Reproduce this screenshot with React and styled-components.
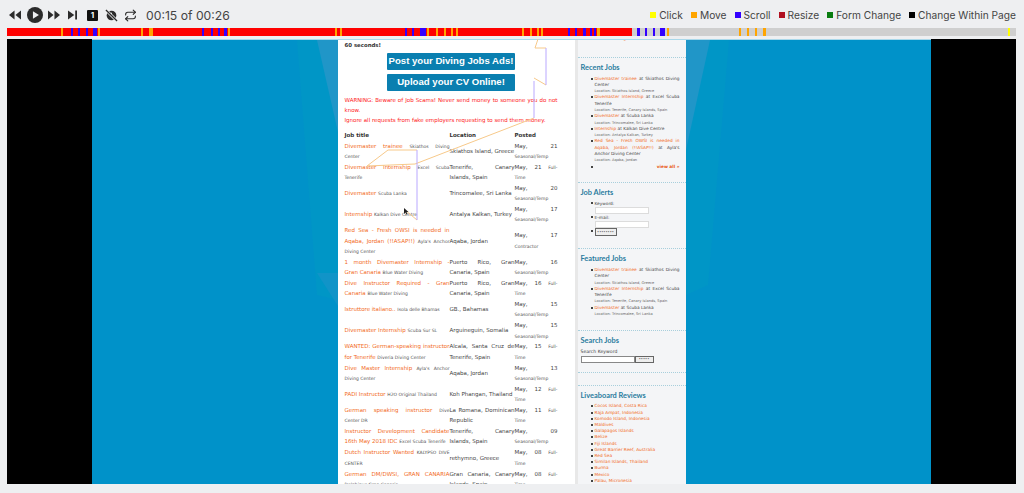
import React from "react";
import styled, { createGlobalStyle } from "styled-components";
import { Repeat } from "lucide-react";

const GlobalStyle = createGlobalStyle`
    html, body {
        margin: 0;
        padding: 0;
        height: 493px;
        overflow: hidden;
        background: #eeeff1;
    }
`;

const Player = styled.div`
    width: 1024px;
    height: 493px;
    display: flex;
    flex-direction: column;
    font-family: Inter, "Liberation Sans", sans-serif;
`;

const Toolbar = styled.div`
    height: 28px;
    display: flex;
    align-items: center;
    padding: 2px 8px 0 9px;
    box-sizing: border-box;
`;

const Controls = styled.div`
    display: flex;
    align-items: center;
`;

const IconSlot = styled.span`
    display: flex;
    align-items: center;
    margin-right: ${(p) => p.$gap}px;
    color: #2b2b2b;
`;

const Badge = styled.span`
    width: 11px;
    height: 11px;
    border-radius: 1px;
    background: #111;
    color: #fff;
    font-size: 8px;
    font-weight: 700;
    display: flex;
    align-items: center;
    justify-content: center;
`;

const Clock = styled.span`
    margin-left: 9px;
    font-size: 12.2px;
    color: #444;
    white-space: nowrap;
`;

const Legend = styled.div`
    margin-left: auto;
    display: flex;
    align-items: center;
    gap: 8px;
`;

const LegendItem = styled.span`
    display: flex;
    align-items: center;
    gap: 3px;
    font-size: 10.2px;
    color: #444;
    white-space: nowrap;

    &::before {
        content: "";
        width: 6px;
        height: 6px;
        background: ${(p) => p.$color};
    }
`;

const Timeline = styled.div`
    position: relative;
    margin: 0 8px 0 7px;
    height: 8px;
    background: #cfcfcf;
    overflow: hidden;
`;

const Played = styled.div`
    height: 100%;
    width: 625px;
    background: #fe0000;
`;

const Marker = styled.span`
    position: absolute;
    top: 0;
    bottom: 0;
    background: ${(p) => p.$color};
`;

const Viewer = styled.div`
    position: relative;
    margin: 3px 8px 0 7px;
    height: 445px;
    display: flex;
    background: #000;
    overflow: hidden;
`;

const Stage = styled.div`
    position: relative;
    margin-left: 85px;
    width: 839px;
    background: #0092c9;
    border-top: 1px solid #a9d8ea;
    display: flex;
    justify-content: center;
    overflow: hidden;
`;

const Glare = styled.svg`
    position: absolute;
    left: 0;
    top: 0;
`;

const Page = styled.div`
    position: relative;
    width: 348px;
    display: flex;
    background: #fff;
    font-family: "DejaVu Sans", sans-serif;
    color: #444;
`;

const MainColumn = styled.div`
    flex: none;
    width: 240px;
    box-sizing: border-box;
    padding: 0 17px 0 7px;
    background: #fff;
    border-right: 3px solid #e8e8e8;
`;

const Notice = styled.div`
    font-size: 5.4px;
    font-weight: 700;
    line-height: 8px;
    margin: 1px 0 4px;
    color: #333;
`;

const AdButton = styled.div`
    width: 128px;
    height: 17px;
    margin: 0 auto 4px;
    border-radius: 1px;
    background: #0a7fb0;
    color: #fff;
    font-family: "Liberation Sans", sans-serif;
    font-size: 9.6px;
    font-weight: 700;
    line-height: 16px;
    text-align: center;
    white-space: nowrap;
`;

const Warning = styled.p`
    margin: 2px 0 5px;
    font-size: 5.5px;
    line-height: 10px;
    color: #fe2020;
    text-align: justify;
`;

const JobTable = styled.table`
    width: 213px;
    table-layout: fixed;
    border-collapse: collapse;
    font-size: 5.5px;
    line-height: 10.2px;
`;

const Th = styled.th`
    width: ${(p) => p.$w}px;
    text-align: left;
    font-weight: 700;
    color: #333;
    padding: 0;
`;

const Td = styled.td`
    padding: 0.4px 0;
    text-align: justify;
    vertical-align: middle;
`;

const JobLink = styled.span`
    color: #f26a1b;
`;

const Small = styled.span`
    font-size: 4.5px;
    line-height: 5px;
    color: #555;
`;

const Sidebar = styled.div`
    flex: 1;
    min-width: 0;
    background: #f4f5f7;
    font-size: 4.3px;
    line-height: 6.3px;
    color: #444;
`;

const Block = styled.div`
    padding: ${(p) => p.$top ?? 5}px 4px ${(p) => p.$bottom ?? 12}px 3px;
    border-bottom: 1px dotted #a8cfdc;
`;

const BlockTitle = styled.h3`
    margin: 0 0 3.5px;
    font-family: Lato, sans-serif;
    font-size: 7.4px;
    line-height: 9px;
    font-weight: 700;
    color: #2a7c9e;
`;

const List = styled.ul`
    margin: ${(p) => p.$top ?? 0}px 2px 0 0;
    padding: 0 0 0 14px;
    text-align: justify;
    list-style: none;

    & > li {
        position: relative;
    }

    & > li::before {
        content: "";
        position: absolute;
        left: -4px;
        top: 2px;
        width: 2px;
        height: 2px;
        background: #444;
    }
`;

const AlertList = styled(List)`
    line-height: 7px;
`;

const Clipped = styled(List)`
    margin-top: -4px;
    height: 12px;
    overflow: hidden;
`;

const Location = styled.div`
    font-size: 3.6px;
    line-height: 6.3px;
    color: #666;
`;

const ViewAll = styled.div`
    text-align: right;
    font-weight: 700;
    color: #e8560f;
`;

const Field = styled.div`
    width: 52px;
    height: 5px;
    background: #fff;
    border: 1px solid #dcdcdc;
`;

const MiniButton = styled.span`
    display: inline-block;
    width: ${(p) => p.$w}px;
    height: ${(p) => p.$h}px;
    line-height: ${(p) => p.$h}px;
    background: #eee;
    border: 1px solid #666;
    text-align: center;
    font-size: 3.6px;
    vertical-align: top;
`;

const SearchRow = styled.div`
    display: flex;
    align-items: center;
    margin-top: 1px;
`;

const SearchField = styled(Field)`
    width: 52px;
    border-color: #888;
`;

const SearchLabel = styled.div`
    font-size: 4.6px;
    line-height: 6px;
    color: #444;
`;

const ReviewList = styled(List)`
    font-size: 4.3px;
    line-height: 6.2px;
    color: #f26a1b;
    text-align: left;
`;

const Trace = styled.svg`
    position: absolute;
    left: 0;
    top: 0;
    pointer-events: none;
`;

const markers = [
    [61, 63, "#ffa500"], [71, 73, "#3300ff"], [78, 80, "#3300ff"], [86, 88, "#3300ff"], [93, 97, "#3300ff"],
    [98, 100, "#ffa500"], [141, 143, "#ffa500"], [149, 153, "#ffa500"], [202, 204, "#3300ff"], [211, 213, "#3300ff"],
    [218, 220, "#3300ff"], [224, 227, "#3300ff"], [228, 230, "#ffa500"], [335, 337, "#ffa500"], [340, 342, "#ffa500"],
    [405, 407, "#3300ff"], [412, 414, "#3300ff"], [420, 426, "#3300ff"], [427, 429, "#ffa500"], [436, 438, "#ffa500"],
    [444, 446, "#ffa500"], [451, 453, "#ffa500"], [456, 458, "#ffa500"], [522, 524, "#ffa500"], [530, 532, "#ffa500"],
    [537, 539, "#ffa500"], [541, 543, "#ffa500"], [568, 570, "#3300ff"], [575, 577, "#3300ff"], [583, 586, "#3300ff"],
    [590, 592, "#3300ff"], [594, 596, "#3300ff"], [597, 600, "#ffa500"], [637, 640, "#3300ff"], [645, 647, "#3300ff"],
    [653, 655, "#3300ff"], [660, 665, "#3300ff"], [667, 669, "#ffa500"], [739, 741, "#ffa500"], [747, 749, "#ffa500"],
    [755, 757, "#ffa500"], [763, 766, "#ffa500"], [1008, 1010, "#ffff00"],
];

const legend = [
    ["Click", "#ffff00"],
    ["Move", "#ffa500"],
    ["Scroll", "#3300ff"],
    ["Resize", "#b01020"],
    ["Form Change", "#0a7d10"],
    ["Change Within Page", "#000"],
];

const jobs = [
    ["Divemaster trainee", "Skiathos Diving Center", "Skiathos Island, Greece", "21", "Seasonal/Temp"],
    ["Divemaster Internship", "Excel Scuba Tenerife", "Tenerife, Canary Islands, Spain", "21", "Full-Time"],
    ["Divemaster", "Scuba Lanka", "Trincomalee, Sri Lanka", "20", "Seasonal/Temp"],
    ["Internship", "Kalkan Dive Centre", "Antalya Kalkan, Turkey", "17", "Seasonal/Temp"],
    ["Red Sea - Fresh OWSI is needed in Aqaba, Jordan (!!ASAP!!)", "Ayla's Anchor Diving Center", "Aqaba, Jordan", "17", "Contractor"],
    ["1 month Divemaster Internship - Gran\u00a0Canaria", "Blue Water Diving", "Puerto Rico, Gran Canaria, Spain", "16", "Seasonal/Temp"],
    ["Dive Instructor Required - Gran Canaria", "Blue Water Diving", "Puerto Rico, Gran Canaria, Spain", "16", "Full-Time"],
    ["Istruttore italiano..", "Isola delle Bhamas", "GB., Bahamas", "15", "Seasonal/Temp"],
    ["Divemaster Internship", "Scuba Sur SL", "Arguineguin, Somalia", "15", "Seasonal/Temp"],
    ["WANTED: German-speaking instructor for Tenerife", "Diveria Diving Center", "Alcala, Santa Cruz de Tenerife, Spain", "15", "Full-Time"],
    ["Dive Master Internship", "Ayla's Anchor Diving Center", "Aqaba, Jordan", "13", "Seasonal/Temp"],
    ["PADI Instructor", "H2O Original Thailand", "Koh Phangan, Thailand", "12", "Full-Time"],
    ["German speaking instructor", "Dive Center DR", "La Romana, Dominican Republic", "11", "Full-Time"],
    ["Instructor Development Candidate 16th May 2018 IDC", "Excel Scuba Tenerife", "Tenerife, Canary Islands, Spain", "09", "Seasonal/Temp"],
    ["Dutch Instructor Wanted", "KALYPSO DIVE CENTER", "rethymno, Greece", "08", "Full-Time"],
    ["German DM/DWSI, GRAN CANARIA", "Delphinus Gran Canaria", "Gran Canaria, Canary Islands, Spain", "08", "Full-Time"],
];

const recent = [
    ["Divemaster trainee", "at Skiathos Diving Center", "Location: Skiathos Island, Greece"],
    ["Divemaster Internship", "at Excel Scuba Tenerife", "Location: Tenerife, Canary Islands, Spain"],
    ["Divemaster", "at Scuba Lanka", "Location: Trincomalee, Sri Lanka"],
    ["Internship", "at Kalkan Dive Centre", "Location: Antalya Kalkan, Turkey"],
    ["Red Sea - Fresh OWSI is needed in Aqaba, Jordan (!!ASAP!!)", "at Ayla's Anchor Diving Center", "Location: Aqaba, Jordan"],
];

const reviews = [
    "Cocos Island, Costa Rica", "Raja Ampat, Indonesia", "Komodo Island, Indonesia", "Maldives", "Galapagos Islands",
    "Belize", "Fiji Islands", "Great Barrier Reef, Australia", "Red Sea", "Similan Islands, Thailand", "Burma", "Mexico",
    "Palau, Micronesia",
];

const JobItems = ({ items }) =>
    items.map(([title, rest, where]) => (
        <li key={title}>
            <JobLink>{title}</JobLink> {rest}
            <Location>{where}</Location>
        </li>
    ));

const App = () => {
    return (
        <Player>
            <GlobalStyle />
            <Toolbar>
                <Controls>
                    <IconSlot $gap={6}>
                        <svg width="12" height="10" viewBox="0 0 13 10" fill="currentColor"><path d="M6 0v10L0 5zM13 0v10L7 5z" /></svg>
                    </IconSlot>
                    <IconSlot $gap={5}>
                        <svg width="16" height="16" viewBox="0 0 17 17"><circle cx="8.5" cy="8.5" r="8.5" fill="currentColor" /><path d="M6.3 4.5v8l6.4-4z" fill="#eeeff1" /></svg>
                    </IconSlot>
                    <IconSlot $gap={8}>
                        <svg width="12" height="10" viewBox="0 0 13 10" fill="currentColor"><path d="M0 0v10l6-5zM7 0v10l6-5z" /></svg>
                    </IconSlot>
                    <IconSlot $gap={10}>
                        <svg width="9" height="10" viewBox="0 0 10 10" fill="currentColor"><path d="M0 0v10l7-5z" /><rect x="8" y="0" width="2" height="10" /></svg>
                    </IconSlot>
                    <IconSlot $gap={7}><Badge>1</Badge></IconSlot>
                    <IconSlot $gap={6}>
                        <svg width="13" height="13" viewBox="0 0 14 14"><circle cx="7" cy="7" r="5.2" fill="currentColor" /><path d="M7 4v3l2 1.4" stroke="#eeeff1" strokeWidth="1" fill="none" /><path d="M1 1l12 12" stroke="#eeeff1" strokeWidth="3" /><path d="M1 1l12 12" stroke="currentColor" strokeWidth="1.4" /></svg>
                    </IconSlot>
                    <IconSlot $gap={0}>
                        <Repeat size={13} strokeWidth={2} />
                    </IconSlot>
                    <Clock>00:15 of 00:26</Clock>
                </Controls>
                <Legend>
                    {legend.map(([label, color]) => (
                        <LegendItem key={label} $color={color}>{label}</LegendItem>
                    ))}
                </Legend>
            </Toolbar>
            <Timeline>
                <Played />
                {markers.map(([from, to, color]) => (
                    <Marker key={from} $color={color} style={{ left: from - 7, width: to - from }} />
                ))}
            </Timeline>
            <Viewer>
                <Stage>
                    <Glare width="839" height="445">
                        <path d="M205 0h41v260l-21-5z" fill="#0096c6" />
                        <path d="M225 0h21v92z" fill="#2096c8" />
                        <path d="M225 233h21v33z" fill="#1194c8" />
                        <path d="M594 0h43l-21 245-22 10z" fill="#0096c6" />
                        <path d="M594 0h24l-24 110z" fill="#2096c8" />
                    </Glare>
                    <Page>
                        <MainColumn>
                            <Notice>60 seconds!</Notice>
                            <AdButton>Post your Diving Jobs Ads!</AdButton>
                            <AdButton>Upload your CV Online!</AdButton>
                            <Warning>
                                WARNING: Beware of Job Scams! Never send money to someone you do not know.
                                <br />
                                Ignore all requests from fake employers requesting to send them money.
                            </Warning>
                            <JobTable>
                                <thead>
                                    <tr>
                                        <Th $w={105}>Job title</Th>
                                        <Th $w={65}>Location</Th>
                                        <Th $w={43}>Posted</Th>
                                    </tr>
                                </thead>
                                <tbody>
                                    {jobs.map(([title, company, place, day, type]) => (
                                        <tr key={title + day}>
                                            <Td><JobLink>{title}</JobLink> <Small>{company}</Small></Td>
                                            <Td>{place}</Td>
                                            <Td>May, {day} <Small>{type}</Small></Td>
                                        </tr>
                                    ))}
                                </tbody>
                            </JobTable>
                        </MainColumn>
                        <Sidebar>
                            <Block $top={0} $bottom={9}>
                                <Clipped><li><JobLink>Candidate Registration</JobLink></li></Clipped>
                            </Block>
                            <Block>
                                <BlockTitle>Recent Jobs</BlockTitle>
                                <List>
                                    <JobItems items={recent} />
                                    <li><ViewAll>view all »</ViewAll></li>
                                </List>
                            </Block>
                            <Block>
                                <BlockTitle>Job Alerts</BlockTitle>
                                <AlertList $top={3}>
                                    <li>Keyword:<Field /></li>
                                    <li>E-mail:<Field /></li>
                                    <li><MiniButton $w={20} $h={6}>••••••••</MiniButton></li>
                                </AlertList>
                            </Block>
                            <Block $bottom={13}>
                                <BlockTitle>Featured Jobs</BlockTitle>
                                <List $top={2}>
                                    <JobItems items={recent.slice(0, 3)} />
                                </List>
                            </Block>
                            <Block $bottom={9}>
                                <BlockTitle>Search Jobs</BlockTitle>
                                <SearchLabel>Search Keyword</SearchLabel>
                                <SearchRow>
                                    <SearchField />
                                    <MiniButton $w={17} $h={5}>•••••</MiniButton>
                                </SearchRow>
                            </Block>
                            <Block $top={6} $bottom={6} />
                            <Block>
                                <BlockTitle>Liveaboard Reviews</BlockTitle>
                                <ReviewList>
                                    {reviews.map((r) => <li key={r}>{r}</li>)}
                                </ReviewList>
                            </Block>
                        </Sidebar>
                    </Page>
                </Stage>
                <Trace width="1009" height="445">
                    <path d="M531 0l-3 9h11M539 46l-12-7M527 79L408 125 360 127 381 111H410M410 181l-12-10" fill="none" stroke="#f7c98a" strokeWidth="1" />
                    <path d="M539 9v37M527 42v37M410 111v70" fill="none" stroke="#b9a8ff" strokeWidth="1" />
                    <path d="M397 169v6l1.5-1.5 1 2 1-.5-1-2h2z" fill="#222" />
                </Trace>
            </Viewer>
        </Player>
    );
};

export default App;
